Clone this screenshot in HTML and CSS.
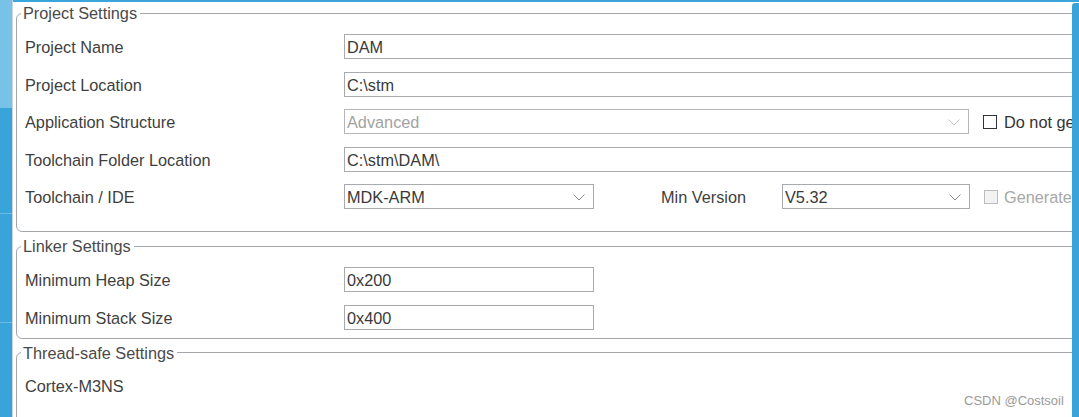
FILE: index.html
```html
<!DOCTYPE html>
<html lang="en">
<head>
<meta charset="utf-8">
<title>Project Manager</title>
<link rel="stylesheet" href="styles.css">
</head>
<body>
<div class="frame">
  <div class="side">
    <div class="side-seg light"></div>
    <div class="side-seg dark s1"></div>
    <div class="side-seg dark s2"></div>
    <div class="side-seg dark s3"></div>
  </div>
  <div class="content">
    <fieldset class="group g1">
      <legend>Project Settings</legend>
      <div class="rows">
        <div class="row">
          <span class="label">Project Name</span>
          <div class="field full">DAM</div>
        </div>
        <div class="row">
          <span class="label">Project Location</span>
          <div class="field full">C:\stm</div>
        </div>
        <div class="row">
          <span class="label">Application Structure</span>
          <div class="field select disabled wide">Advanced<svg class="chev" width="12" height="7" viewBox="0 0 12 7"><polyline points="0.5,0.5 6,6 11.5,0.5" fill="none" stroke="currentColor" stroke-width="1"/></svg></div>
          <span class="check"></span>
          <span class="check-text">Do not generate the main()</span>
        </div>
        <div class="row">
          <span class="label">Toolchain Folder Location</span>
          <div class="field full">C:\stm\DAM\</div>
        </div>
        <div class="row">
          <span class="label">Toolchain / IDE</span>
          <div class="field select short">MDK-ARM<svg class="chev" width="12" height="7" viewBox="0 0 12 7"><polyline points="0.5,0.5 6,6 11.5,0.5" fill="none" stroke="currentColor" stroke-width="1"/></svg></div>
          <span class="label2">Min Version</span>
          <div class="field select ver">V5.32<svg class="chev" width="12" height="7" viewBox="0 0 12 7"><polyline points="0.5,0.5 6,6 11.5,0.5" fill="none" stroke="currentColor" stroke-width="1"/></svg></div>
          <span class="check off"></span>
          <span class="check-text off">Generate Under Root</span>
        </div>
      </div>
    </fieldset>
    <fieldset class="group g2">
      <legend>Linker Settings</legend>
      <div class="rows">
        <div class="row">
          <span class="label">Minimum Heap Size</span>
          <div class="field short">0x200</div>
        </div>
        <div class="row">
          <span class="label">Minimum Stack Size</span>
          <div class="field short">0x400</div>
        </div>
      </div>
    </fieldset>
    <fieldset class="group g3">
      <legend>Thread-safe Settings</legend>
      <div class="rows">
        <div class="row">
          <span class="label">Cortex-M3NS</span>
        </div>
      </div>
    </fieldset>
    <div class="watermark">CSDN @Costsoil</div>
  </div>
  <div class="edge"></div>
</div>
</body>
</html>
```
FILE: styles.css
```css
html, body {
  margin: 0;
  padding: 0;
  background: #ffffff;
}
body {
  width: 1079px;
  height: 417px;
  overflow: hidden;
  font-family: "Liberation Sans", Arial, sans-serif;
  font-size: 16.3px;
  color: #3f3f3f;
}
.frame {
  display: flex;
  width: 1079px;
  height: 417px;
  border-top: 2px solid #3aa6dc;
  box-sizing: border-box;
}
.side {
  width: 12px;
  flex: none;
  display: flex;
  flex-direction: column;
  border-right: 1px solid #c9d3dc;
  margin-top: -2px;
}
.side-seg.light {
  height: 108px;
  background: #78c2e8;
}
.side-seg.dark {
  background: #38a4da;
}
.side-seg.s1 { height: 105px; border-bottom: 1px solid #6dbbe4; }
.side-seg.s2 { height: 108px; border-bottom: 1px solid #6dbbe4; }
.side-seg.s3 { flex: 1; }
.content {
  flex: 1;
  position: relative;
  overflow: hidden;
  padding-top: 2px;
}
.edge {
  width: 7px;
  flex: none;
  margin-top: 1px;
  background: #38a4da;
  border-top-left-radius: 3px;
}
.group {
  width: 1120px;
  margin: 0 0 0 3px;
  padding: 12px 0 22px 8px;
  border: 1px solid #a3a7ab;
  border-radius: 6px;
  box-sizing: border-box;
}
.group legend {
  margin-left: -4px;
  padding: 0 3px 0 2px;
  line-height: 18px;
  color: #4a4a4a;
}
.g2 {
  margin-top: 5px;
  padding-bottom: 8px;
}
.g3 {
  margin-top: 5px;
  padding-top: 11px;
  height: 120px;
}
.rows {
  display: flex;
  flex-direction: column;
  gap: 12.5px;
}
.row {
  display: flex;
  align-items: center;
  height: 25px;
}
.label {
  width: 319px;
  flex: none;
  white-space: nowrap;
  padding-top: 2px;
}
.field {
  height: 25px;
  box-sizing: border-box;
  border: 1px solid #a7abaf;
  background: #ffffff;
  padding: 0 2px;
  line-height: 25px;
  color: #3a3a3a;
  white-space: nowrap;
  position: relative;
  flex: none;
}
.field.full {
  flex: 1;
}
.field.wide { width: 625px; }
.field.short { width: 250px; }
.field.ver { width: 188px; }
.field.disabled {
  color: #a2a2a2;
  border-color: #b4b7ba;
}
.chev {
  position: absolute;
  right: 8px;
  top: 9px;
  color: #8a8a8a;
}
.disabled .chev {
  color: #c4c4c4;
}
.label2 {
  margin-left: 67px;
  width: 121px;
  flex: none;
  padding-top: 2px;
}
.check {
  width: 14px;
  height: 14px;
  box-sizing: border-box;
  border: 1px solid #333333;
  background: #ffffff;
  margin-left: 14px;
  flex: none;
}
.check.off {
  border-color: #bcbcbc;
  background: #f2f2f2;
}
.check-text {
  margin-left: 7px;
  white-space: nowrap;
  color: #333333;
  padding-top: 2px;
}
.check-text.off {
  margin-left: 6px;
  color: #a8a8a8;
}
.watermark {
  position: absolute;
  left: 951px;
  top: 391px;
  font-size: 13px;
  color: #9a9a9a;
  white-space: nowrap;
}
```
